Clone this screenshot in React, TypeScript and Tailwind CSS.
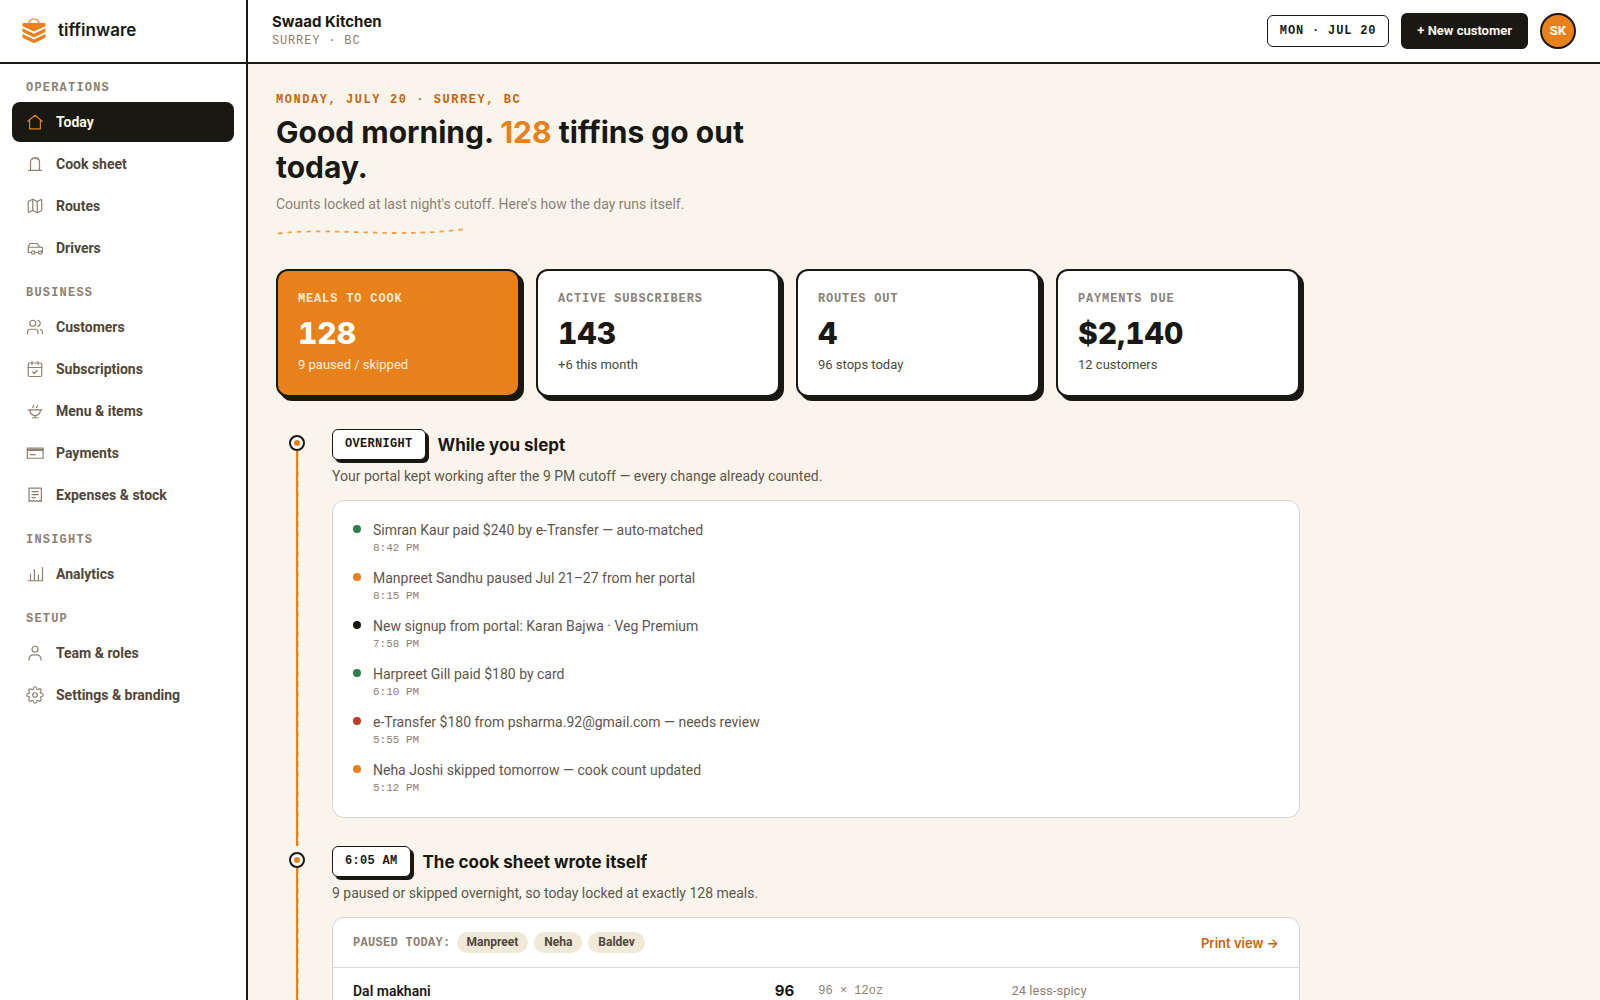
import type { ReactNode } from "react";
import { CalendarCheck, Map, Users } from "lucide-react";
import { FiSettings } from "react-icons/fi";

function Glyph({ children }: { children: ReactNode }) {
  return (
    <svg viewBox="0 0 24 24" className="size-[18px]" fill="none" stroke="currentColor" strokeWidth="1.6" strokeLinecap="round" strokeLinejoin="round" aria-hidden="true">
      {children}
    </svg>
  );
}

type NavItem = { label: string; icon: ReactNode; active?: boolean };

const navGroups: { title: string; items: NavItem[] }[] = [
  {
    title: "OPERATIONS",
    items: [
      { label: "Today", active: true, icon: <Glyph><path d="M2.5 11 12 3l9.500 8M4.800 9.500v11.700h14.400V9.500" /></Glyph> },
      { label: "Cook sheet", icon: <Glyph><path d="M3.500 20.500h17M6 20.500V10c0-4 2.500-6.500 6-6.500s6 2.500 6 6.500v10.500M9 4.300v1.400M12 3.500v1.400M15 4.300v1.400" /></Glyph> },
      { label: "Routes", icon: <Map className="size-[18px]" strokeWidth={1.6} aria-hidden="true" /> },
      { label: "Drivers", icon: <Glyph><path d="M6.500 18H3v-7.500L5.500 6H15l3 4.500 4 1V18h-.500M3 11h15M12.500 18h3.500" /><circle cx="9.500" cy="18" r="2.200" /><circle cx="18.800" cy="18" r="2.200" /></Glyph> },
    ],
  },
  {
    title: "BUSINESS",
    items: [
      { label: "Customers", icon: <Users className="size-[18px]" strokeWidth={1.6} aria-hidden="true" /> },
      { label: "Subscriptions", icon: <CalendarCheck className="size-[18px]" strokeWidth={1.6} aria-hidden="true" /> },
      { label: "Menu & items", icon: <Glyph><path d="M3 10.500h18.500M5 10.500c.500 4.500 3.500 7.500 7.200 7.500s6.700-3 7.200-7.500M12.200 18v3M8.500 21H16M10.200 4.500 9 7.500M15.200 4.500 14 7.500" /></Glyph> },
      { label: "Payments", icon: <Glyph><rect x="1.800" y="5.500" width="21" height="13.500" /><path d="M2 8h20.500" strokeWidth="2.400" /><path d="M5.800 14.200h6.500" /></Glyph> },
      { label: "Expenses & stock", icon: <Glyph><path d="M4 2.800h16.500v18l-2-1.500-2 1.500-2.100-1.500-2.100 1.500-2.100-1.500-2.100 1.500-2-1.500L4 20.800zM8 7.500h8.500M8 11.500h8.500M8 15.500h4.500" /></Glyph> },
    ],
  },
  {
    title: "INSIGHTS",
    items: [{ label: "Analytics", icon: <Glyph><path d="M2.800 21h19.400M6 21v-9M11.200 21V6M16.600 21v-7.500M22 21V3.500" /></Glyph> }],
  },
  {
    title: "SETUP",
    items: [
      { label: "Team & roles", icon: <Glyph><circle cx="12" cy="7" r="4" /><path d="M4 21.200V20a6 6 0 0 1 6-5.500h4a6 6 0 0 1 6 5.500v1.200" /></Glyph> },
      { label: "Settings & branding", icon: <FiSettings className="size-[18px]" strokeWidth={1.6} aria-hidden="true" /> },
    ],
  },
];

const stats = [
  { label: "MEALS TO COOK", value: "128", note: "9 paused / skipped", accent: true },
  { label: "ACTIVE SUBSCRIBERS", value: "143", note: "+6 this month" },
  { label: "ROUTES OUT", value: "4", note: "96 stops today" },
  { label: "PAYMENTS DUE", value: "$2,140", note: "12 customers" },
];

const events = [
  { text: "Simran Kaur paid $240 by e-Transfer — auto-matched", time: "8:42 PM", dot: "bg-[#2e7d4f]" },
  { text: "Manpreet Sandhu paused Jul 21–27 from her portal", time: "8:15 PM", dot: "bg-[#e8811a]" },
  { text: "New signup from portal: Karan Bajwa · Veg Premium", time: "7:58 PM", dot: "bg-[#1a1813]" },
  { text: "Harpreet Gill paid $180 by card", time: "6:10 PM", dot: "bg-[#2e7d4f]" },
  { text: "e-Transfer $180 from psharma.92@gmail.com — needs review", time: "5:55 PM", dot: "bg-[#c0392b]" },
  { text: "Neha Joshi skipped tomorrow — cook count updated", time: "5:12 PM", dot: "bg-[#e8811a]" },
];

function Logo() {
  return (
    <svg viewBox="0 0 24 26" className="h-[26px] w-6 text-[#e8811a]" fill="currentColor" aria-hidden="true">
      <path d="M7 6V5.500a5 4.600 0 0 1 10 0V6" fill="none" stroke="currentColor" strokeWidth="1.300" />
      <path d="M1.800 5h20.400q1.300 0 1.300 1.300v1.500q0 .500-.600.800L12 13.600 1.100 8.600q-.600-.300-.600-.800V6.300Q.5 5 1.800 5z" />
      <path d="M.5 10.300 12 15.800l11.500-5.500v3.200q0 .500-.600.800L12 19.500 1.100 14.300q-.600-.300-.600-.800z" />
      <path d="M.5 16 12 21.400 23.500 16v3.300q0 .500-.600.800L12 25.200 1.100 20.100q-.600-.300-.600-.800z" />
    </svg>
  );
}

function Sidebar() {
  return (
    <aside className="flex w-[248px] shrink-0 flex-col border-r-2 border-[#1a1813] bg-white">
      <div className="flex h-16 shrink-0 items-center gap-3 border-b-2 border-[#1a1813] px-[22px]">
        <Logo />
        <span className="font-['Inter',sans-serif] text-[17px] font-semibold">tiffinware</span>
      </div>
      <nav className="flex flex-col gap-[17px] px-3 pt-4">
        {navGroups.map((group) => (
          <div key={group.title}>
            <h2 className="mb-1.5 px-3.5 font-['Liberation_Mono',monospace] text-xs leading-4 font-bold tracking-widest text-[#8c8172]">{group.title}</h2>
            <ul className="flex flex-col gap-0.5">
              {group.items.map((item) => (
                <li key={item.label}>
                  <a
                    href="#"
                    aria-current={item.active ? "page" : undefined}
                    className={
                      item.active
                        ? "flex h-10 items-center gap-3 rounded-lg bg-[#1a1813] px-3.5 text-sm font-bold text-[#faf5ec]"
                        : "flex h-10 items-center gap-3 rounded-lg px-3.5 text-sm font-bold text-[#4f463c]"
                    }
                  >
                    <span className={item.active ? "text-[#e8811a]" : "text-[#8c8172]"}>{item.icon}</span>
                    {item.label}
                  </a>
                </li>
              ))}
            </ul>
          </div>
        ))}
      </nav>
    </aside>
  );
}

function TopBar() {
  return (
    <header className="flex h-16 shrink-0 items-center gap-3 border-b-2 border-[#1a1813] bg-white px-6">
      <div className="mr-auto">
        <p className="font-['Inter',sans-serif] text-[15px] leading-5 font-bold">Swaad Kitchen</p>
        <p className="font-['Liberation_Mono',monospace] text-xs leading-[18px] tracking-[0.07em] text-[#8c8172]">SURREY · BC</p>
      </div>
      <time dateTime="07-20" className="rounded-md border border-[#1a1813] px-3 font-['Liberation_Mono',monospace] text-xs leading-[30px] font-bold tracking-[0.07em]">
        MON · JUL 20
      </time>
      <button type="button" className="h-9 rounded-md bg-[#1a1813] px-4 text-[13px] font-bold text-[#faf5ec]">+ New customer</button>
      <button type="button" className="size-9 rounded-full border-2 border-[#1a1813] bg-[#e8811a] text-[13px] font-bold text-white">SK</button>
    </header>
  );
}

function Step({ tag, title, note, children }: { tag: string; title: string; note: string; children: ReactNode }) {
  return (
    <section className="flex gap-3.5">
      <div className="flex w-[42px] shrink-0 flex-col items-center pt-1.5">
        <span className="flex size-4 shrink-0 items-center justify-center rounded-full border-2 border-[#1a1813] bg-white">
          <span className="size-1.5 rounded-full bg-[#e8811a]" />
        </span>
        <span className="relative w-0.5 flex-1 bg-[#e8811a]">
          <span className="absolute inset-y-0 left-full w-px bg-[repeating-linear-gradient(#f3c590_0_6px,transparent_6px_10px)]" />
        </span>
      </div>
      <div className="min-w-0 flex-1 pb-7">
        <div className="flex items-center gap-3">
          <span className="rounded-md border border-[#1a1813] bg-white px-3 font-['Liberation_Mono',monospace] text-xs leading-[29px] font-bold tracking-wide shadow-[3px_3px_0_#1a1813]">{tag}</span>
          <h2 className="font-['Inter',sans-serif] text-[17px] leading-7 font-bold">{title}</h2>
        </div>
        <p className="mt-1.5 text-sm leading-5 text-[#5f564b]">{note}</p>
        <div className="mt-3.5 rounded-xl border border-[#d5d4d2] bg-white">{children}</div>
      </div>
    </section>
  );
}

export default function App() {
  return (
    <div className="flex h-screen overflow-hidden bg-[#faf5ec] font-['Roboto',sans-serif] text-[#1a1813]">
      <Sidebar />
      <div className="flex min-w-0 flex-1 flex-col">
        <TopBar />
        <main className="flex-1 overflow-y-auto px-7 pt-7 [scrollbar-width:none]">
          <div className="max-w-5xl">
            <p className="font-['Liberation_Mono',monospace] text-xs leading-4 font-bold tracking-[0.13em] text-[#c9640b]">MONDAY, JULY 20 · SURREY, BC</p>
            <h1 className="mt-[7px] max-w-lg font-['Inter',sans-serif] text-3xl leading-[35px] font-bold">
              Good morning. <span className="text-[#e8811a]">128</span> tiffins go out today.
            </h1>
            <p className="mt-[9px] text-sm leading-5 text-[#8c8172]">Counts locked at last night's cutoff. Here's how the day runs itself.</p>
            <svg viewBox="0 0 190 14" className="mt-2.5 h-3.5 w-[190px]" fill="none" aria-hidden="true">
              <path d="M2 9.500C40 5 80 9 120 9S170 7 187 5.500" stroke="#f0a050" strokeWidth="1.800" strokeDasharray="4.500 5" />
            </svg>

            <div className="mt-[31px] grid grid-cols-4 gap-4">
              {stats.map((s) => (
                <div
                  key={s.label}
                  className={
                    s.accent
                      ? "rounded-xl border-2 border-[#1a1813] bg-[#e8811a] p-5 text-white shadow-[4px_4px_0_#1a1813]"
                      : "rounded-xl border-2 border-[#1a1813] bg-white p-5 shadow-[4px_4px_0_#1a1813]"
                  }
                >
                  <p className={s.accent ? "font-['Liberation_Mono',monospace] text-xs leading-4 font-bold tracking-[0.07em] text-[#fdebd6]" : "font-['Liberation_Mono',monospace] text-xs leading-4 font-bold tracking-[0.07em] text-[#8c8172]"}>{s.label}</p>
                  <p className="mt-2 font-['Inter',sans-serif] text-3xl leading-9 font-extrabold tabular-nums">{s.value}</p>
                  <p className={s.accent ? "mt-1 text-[13px] leading-5 text-[#fdf0e0]" : "mt-1 text-[13px] leading-5 text-[#4f463c]"}>{s.note}</p>
                </div>
              ))}
            </div>

            <div className="mt-8">
              <Step tag="OVERNIGHT" title="While you slept" note="Your portal kept working after the 9 PM cutoff — every change already counted.">
                <ul className="flex flex-col gap-3 p-5">
                  {events.map((e) => (
                    <li key={e.time} className="flex gap-3">
                      <span className={`mt-1 size-2 shrink-0 rounded-full ${e.dot}`} />
                      <div>
                        <p className="text-sm leading-[18px] text-[#5f564b]">{e.text}</p>
                        <p className="font-['Liberation_Mono',monospace] text-[11px] leading-[18px] text-[#8c8172]">{e.time}</p>
                      </div>
                    </li>
                  ))}
                </ul>
              </Step>

              <Step tag="6:05 AM" title="The cook sheet wrote itself" note="9 paused or skipped overnight, so today locked at exactly 128 meals.">
                <div className="flex items-center gap-1.5 border-b border-[#dddcda] px-5 py-3.5">
                  <span className="font-['Liberation_Mono',monospace] text-xs leading-4 font-bold tracking-wide text-[#8c8172]">PAUSED TODAY:</span>
                  {["Manpreet", "Neha", "Baldev"].map((name) => (
                    <span key={name} className="rounded-full bg-[#f1e9d8] px-2.5 text-xs leading-[21px] font-bold text-[#4f463c]">{name}</span>
                  ))}
                  <a href="#" className="ml-auto font-['Inter',sans-serif] text-[13px] leading-5 font-semibold text-[#c9640b]">Print view →</a>
                </div>
                <table className="w-full table-fixed text-left">
                  <tbody>
                    <tr className="h-[46px]">
                      <th scope="row" className="w-[41%] pl-5 text-sm font-semibold">Dal makhani</th>
                      <td className="w-[8%] pr-3 text-right font-['Inter',sans-serif] text-[15px] font-bold">96</td>
                      <td className="w-[20%] px-3 font-['Liberation_Mono',monospace] text-xs text-[#8c8172]">96 × 12oz</td>
                      <td className="w-[31%] px-3 text-[13px] text-[#8c8172]">24 less-spicy</td>
                    </tr>
                  </tbody>
                </table>
              </Step>
            </div>
          </div>
        </main>
      </div>
    </div>
  );
}
